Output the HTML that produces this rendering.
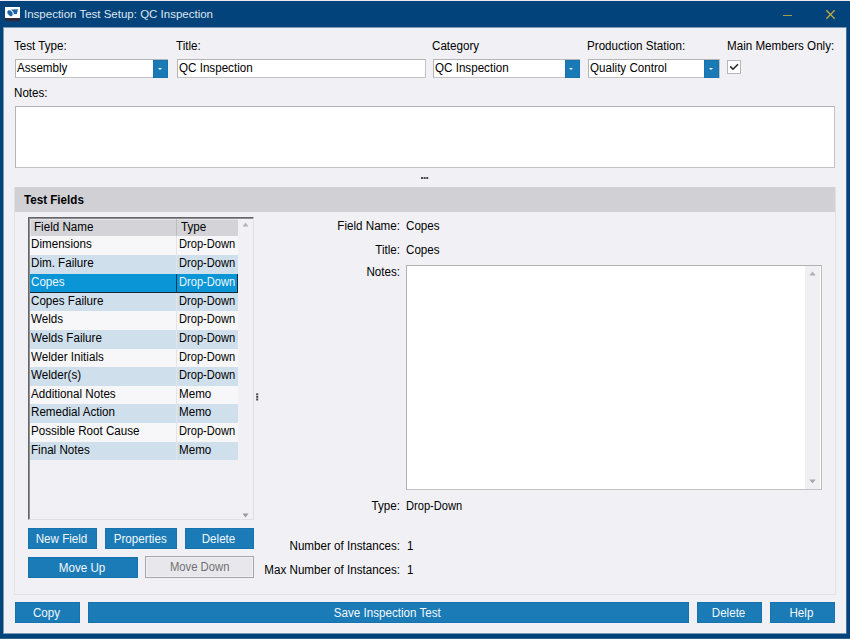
<!DOCTYPE html>
<html><head><meta charset="utf-8">
<style>
*{box-sizing:border-box;margin:0;padding:0}
html,body{width:850px;height:639px;overflow:hidden;background:#03437b}
body{position:relative;font-family:"Liberation Sans",sans-serif;font-size:12.5px;color:#000}
.a{position:absolute}
.t{position:absolute;white-space:nowrap;line-height:14px;font-size:12.5px;transform:scaleX(.93);transform-origin:0 0;margin-top:0.7px}
.r{text-align:right;transform-origin:100% 0}
#topline{left:0;top:0;width:850px;height:1px;background:#eceaf0}
#content{left:4px;top:28px;width:842px;height:605px;background:#f1f1f5}
.title{color:#dfe6ee;font-size:11.5px;transform:none;margin-top:0}
.inp{position:absolute;background:#fff;border:1px solid #b4b4b4;border-right-color:#c4c4c4;border-bottom-color:#c4c4c4;height:19px}
.ddb{position:absolute;background:#1a7ab6;width:15.3px;height:18px;box-shadow:inset 0 0 0 0.6px #166fae}
.ddb::after{content:"";position:absolute;left:4.8px;top:8.5px;border-left:2.7px solid transparent;border-right:2.7px solid transparent;border-top:2.6px solid #fff}
.btn{position:absolute;background:#1b7bb6;color:#f4f8fb;height:20.5px;box-shadow:inset 0 0 0 1px #1773b0}
.btn span{position:absolute;left:-1px;right:1px;top:3.6px;text-align:center;line-height:14px;font-size:12.5px;white-space:nowrap;transform:scaleX(.93)}
.row{position:absolute;left:0;width:208px}
.row span{position:absolute;top:1.1px;line-height:14px;white-space:nowrap;transform:scaleX(.93);transform-origin:0 0}
.row .c1{left:0.5px}
.row .c2{left:149px}
.row .dd{transform:scaleX(.89)}
.w{background:#f7f7f9}
.b{background:#cfdfec}
.sel{background:#0a95d6;color:#eef6fb}
.sr{position:absolute;right:0;top:0;width:1px;height:100%;background:#0c2a3a}
.sb{position:absolute;left:0;bottom:0;width:100%;height:1px;background:#1a2a33}
.vl{position:absolute;left:146px;top:0;width:1px;height:100%;background:#e4e4e8}
.dot{position:absolute;width:2px;height:2px;background:#555}
</style></head><body>
<div class="a" id="topline"></div>
<div class="a" style="left:3px;top:27px;width:844px;height:607px;background:#7a9ab8"></div>
<div class="a" style="left:846px;top:27px;width:1px;height:607px;background:#46709a"></div>
<!-- title icon -->
<div class="a" style="left:5px;top:7px;width:15px;height:12px;background:#fff"></div>
<div class="a" style="left:5px;top:18px;width:15px;height:3px;background:#2f2a3c"></div>
<svg class="a" style="left:5px;top:7px" width="15" height="12" viewBox="0 0 15 12">
<path d="M3.3 3.3 L6.2 3.5 L7.9 6.4 L7.4 8.6 L5.9 9.6 L4.4 8.6 L2.4 6.5 L2.5 4.6 Z" fill="#1c62a4"/>
<path d="M6.4 2.6 L12.9 2.3 L11.9 7 L9.3 7.3 L8.4 5.2 Z" fill="#1c62a4"/>
<path d="M5 2.6 L7.6 5.6 L8.6 8.3" stroke="#9cc0dc" stroke-width="0.8" fill="none"/>
</svg>
<div class="t title" style="left:24px;top:7px">Inspection Test Setup: QC Inspection</div>
<div class="a" style="left:783px;top:14.5px;width:9.2px;height:1.3px;background:#a89c48"></div>
<svg class="a" style="left:825px;top:9px" width="11" height="11" viewBox="0 0 11 11"><path d="M1.3 1.3 L9.7 9.7 M9.7 1.3 L1.3 9.7" stroke="#c2ae38" stroke-width="1.25"/></svg>

<div class="a" id="content"></div>
<div class="a" style="left:0;top:638px;width:850px;height:1px;background:#33618c"></div>

<!-- top labels -->
<div class="t" style="left:14px;top:38.4px">Test Type:</div>
<div class="t" style="left:176px;top:38.4px">Title:</div>
<div class="t" style="left:432px;top:38.4px">Category</div>
<div class="t" style="left:587px;top:38.4px">Production Station:</div>
<div class="t" style="left:727px;top:38.4px">Main Members Only:</div>

<div class="inp" style="left:15px;top:59px;width:153px"></div>
<div class="ddb" style="left:153px;top:59.6px"></div>
<div class="t" style="left:17px;top:60.2px">Assembly</div>

<div class="inp" style="left:177px;top:59px;width:249px"></div>
<div class="t" style="left:179px;top:60.2px">QC Inspection</div>

<div class="inp" style="left:433px;top:59px;width:147px"></div>
<div class="ddb" style="left:564.5px;top:59.6px"></div>
<div class="t" style="left:435px;top:60.2px">QC Inspection</div>

<div class="inp" style="left:588px;top:59px;width:132px"></div>
<div class="ddb" style="left:704.2px;top:59.6px"></div>
<div class="t" style="left:590px;top:60.2px">Quality Control</div>

<div class="a" style="left:727px;top:60px;width:14px;height:14px;background:#fff;border:1px solid #b6b6b6"></div>
<svg class="a" style="left:727px;top:60px" width="14" height="14" viewBox="0 0 14 14"><path d="M3.2 6.4 L6 9.2 L11 4.2" fill="none" stroke="#262626" stroke-width="1.6"/></svg>

<div class="t" style="left:14px;top:85.7px">Notes:</div>
<div class="inp" style="left:15px;top:106px;width:820px;height:62px"></div>

<!-- splitter dots -->
<svg class="a" style="left:419px;top:175px" width="12" height="6" viewBox="0 0 12 6"><rect x="2" y="2" width="2" height="2" fill="#4a4a4a"/><rect x="4.6" y="2" width="2" height="2" fill="#4a4a4a"/><rect x="7.2" y="2" width="2" height="2" fill="#4a4a4a"/></svg>

<!-- group box -->
<div class="a" style="left:14px;top:187px;width:822px;height:408px;border:1px solid #e2e2e6"></div>
<div class="a" style="left:15px;top:187px;width:820px;height:25px;background:#d0d0d5"></div>
<div class="t" style="left:24px;top:192.2px;font-weight:bold">Test Fields</div>

<!-- grid -->
<div class="a" style="left:28px;top:217px;width:226px;height:303px;background:#f1f1f5;border-top:1px solid #666668;border-left:1px solid #666668;border-right:1px solid #e0e0e4;border-bottom:1px solid #e0e0e4;box-shadow:inset 1px 1px 0 #8e8e92"></div>
<div class="a" style="left:30px;top:219px;width:208px;height:17px;background:#d3d3d8;box-shadow:inset 1px 1px 0 #e6e6ea"></div>
<div class="a" style="left:176px;top:219px;width:1px;height:17px;background:#bcbcc2"></div>
<div class="t" style="left:33.6px;top:219.8px">Field Name</div>
<div class="t" style="left:181px;top:219.8px">Type</div>
<svg class="a" style="left:242px;top:222px" width="7" height="5" viewBox="0 0 7 5"><path d="M0.5 4.5 L3.5 0.5 L6.5 4.5 Z" fill="#b5b5b8"/></svg>
<svg class="a" style="left:242px;top:513px" width="7" height="5" viewBox="0 0 7 5"><path d="M0.5 0.5 L3.5 4.5 L6.5 0.5 Z" fill="#9a9a9e"/></svg>

<div class="a" style="left:30px;top:236px;width:208px;height:224px;overflow:hidden">
 <div class="row w" style="top:0px;height:19px"><div class="vl"></div><span class="c1">Dimensions</span><span class="c2 dd">Drop-Down</span></div>
 <div class="row b" style="top:19px;height:19px"><div class="vl"></div><span class="c1">Dim. Failure</span><span class="c2 dd">Drop-Down</span></div>
 <div class="row sel" style="top:38px;height:19px"><div class="vl" style="background:#0c3a55"></div><div class="sr"></div><div class="sb"></div><span class="c1">Copes</span><span class="c2 dd">Drop-Down</span></div>
 <div class="row b" style="top:57px;height:18px"><div class="vl"></div><span class="c1">Copes Failure</span><span class="c2 dd">Drop-Down</span></div>
 <div class="row w" style="top:75px;height:19px"><div class="vl"></div><span class="c1">Welds</span><span class="c2 dd">Drop-Down</span></div>
 <div class="row b" style="top:94px;height:19px"><div class="vl"></div><span class="c1">Welds Failure</span><span class="c2 dd">Drop-Down</span></div>
 <div class="row w" style="top:113px;height:18px"><div class="vl"></div><span class="c1">Welder Initials</span><span class="c2 dd">Drop-Down</span></div>
 <div class="row b" style="top:131px;height:19px"><div class="vl"></div><span class="c1">Welder(s)</span><span class="c2 dd">Drop-Down</span></div>
 <div class="row w" style="top:150px;height:18px"><div class="vl"></div><span class="c1">Additional Notes</span><span class="c2">Memo</span></div>
 <div class="row b" style="top:168px;height:19px"><div class="vl"></div><span class="c1">Remedial Action</span><span class="c2">Memo</span></div>
 <div class="row w" style="top:187px;height:19px"><div class="vl"></div><span class="c1">Possible Root Cause</span><span class="c2 dd">Drop-Down</span></div>
 <div class="row b" style="top:206px;height:18px"><div class="vl"></div><span class="c1">Final Notes</span><span class="c2">Memo</span></div>
</div>

<!-- vertical splitter dots -->
<svg class="a" style="left:254px;top:391px" width="6" height="12" viewBox="0 0 6 12"><rect x="2.2" y="2.3" width="2" height="2" fill="#4a4a4a"/><rect x="2.2" y="4.9" width="2" height="2" fill="#4a4a4a"/><rect x="2.2" y="7.5" width="2" height="2" fill="#4a4a4a"/></svg>

<!-- grid buttons -->
<div class="btn" style="left:28px;top:528px;height:21px;width:69px"><span>New Field</span></div>
<div class="btn" style="left:104.5px;top:528px;height:21px;width:72.5px"><span>Properties</span></div>
<div class="btn" style="left:184.7px;top:528px;height:21px;width:69px"><span>Delete</span></div>
<div class="btn" style="left:28px;top:557px;width:110px"><span>Move Up</span></div>
<div class="btn" style="left:145px;top:556px;width:109.4px;height:22px;background:#e8e8ec;border:1px solid #a8a8ac;color:#707074;box-shadow:inset 0 0 0 1px #f0f0f3"><span style="top:3.2px;left:0;right:0;transform:scaleX(.9)">Move Down</span></div>

<!-- right panel -->
<div class="t r" style="left:300px;width:100px;top:218.2px">Field Name:</div>
<div class="t" style="left:406px;top:218.2px">Copes</div>
<div class="t r" style="left:300px;width:100px;top:242.1px">Title:</div>
<div class="t" style="left:406px;top:242.1px">Copes</div>
<div class="t r" style="left:300px;width:100px;top:264.8px">Notes:</div>
<div class="inp" style="left:405.5px;top:265px;width:416px;height:225px;border-color:#b0b0b0;border-right-color:#bcbcbc;border-bottom-color:#c4c4c4"></div>
<div class="a" style="left:805px;top:266px;width:15px;height:223px;background:#f0f0f4"></div>
<svg class="a" style="left:809px;top:270.5px" width="7" height="5" viewBox="0 0 7 5"><path d="M0.3 4.5 L3.5 0.5 L6.7 4.5 Z" fill="#b0b0b4"/></svg>
<svg class="a" style="left:809px;top:479px" width="7" height="5" viewBox="0 0 7 5"><path d="M0.3 0.5 L3.5 4.5 L6.7 0.5 Z" fill="#a8a8ac"/></svg>

<div class="t r" style="left:300px;width:100px;top:498.8px">Type:</div>
<div class="t" style="left:406px;top:498.8px;transform:scaleX(.89)">Drop-Down</div>
<div class="t r" style="left:200px;width:200px;top:538.2px">Number of Instances:</div>
<div class="t" style="left:407px;top:538.2px">1</div>
<div class="t r" style="left:200px;width:200px;top:562.2px">Max Number of Instances:</div>
<div class="t" style="left:407px;top:562.2px">1</div>

<!-- bottom buttons -->
<div class="btn" style="left:15px;top:602px;height:21px;width:65px"><span>Copy</span></div>
<div class="btn" style="left:88px;top:602px;height:21px;width:600.5px"><span>Save Inspection Test</span></div>
<div class="btn" style="left:696.7px;top:602px;height:21px;width:65.1px"><span>Delete</span></div>
<div class="btn" style="left:769.8px;top:602px;height:21px;width:64.9px"><span>Help</span></div>

</body></html>
